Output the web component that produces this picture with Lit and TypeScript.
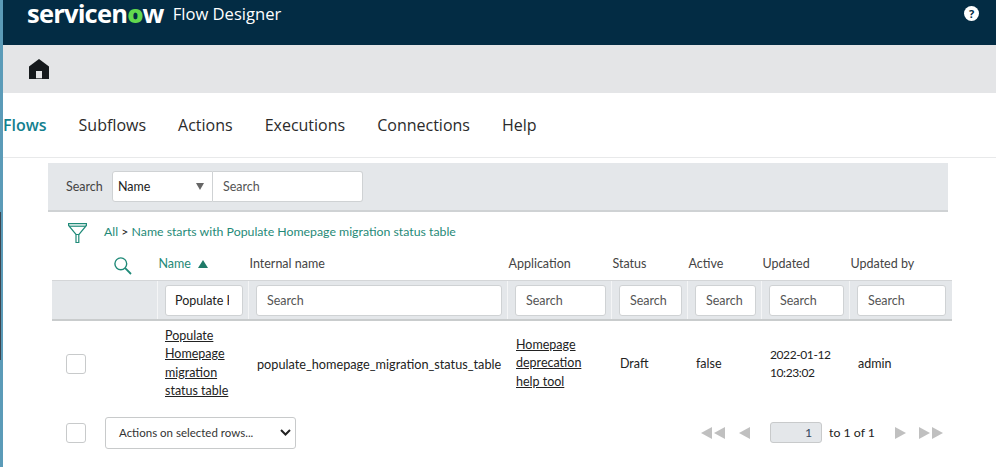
import { LitElement, css, html } from "lit";
import { customElement } from "lit/decorators.js";

const columns = [
    { label: "Name", width: 91, value: "Populate H" },
    { label: "Internal name", width: 259 },
    { label: "Application", width: 104 },
    { label: "Status", width: 76 },
    { label: "Active", width: 74 },
    { label: "Updated", width: 88 },
    { label: "Updated by", width: 102 },
];

@customElement("app-root")
export class AppRoot extends LitElement {
    render() {
        return html`
        <div class="strip"><span class="strip-dark"></span></div>
        <div class="page">
            <header class="topbar">
                <span class="logo">servicen<span class="logo-o">o</span>w</span>
                <span class="product">Flow Designer</span>
                <span class="help">?</span>
            </header>
            <div class="homebar">
                <svg width="20" height="20" viewBox="0 0 20 20">
                    <path fill="#15191c" d="M10 0 L20 7.500 V20 H0 V7.500 Z"/>
                    <rect x="7" y="12" width="6" height="7.300" fill="#e4e5e7"/>
                </svg>
            </div>
            <nav class="tabs">
                <span class="active">Flows</span>
                <span>Subflows</span>
                <span>Actions</span>
                <span>Executions</span>
                <span>Connections</span>
                <span>Help</span>
            </nav>
            <section class="searchbar">
                <span class="search-label">Search</span>
                <span class="select">Name<i></i></span>
                <span class="field joined">Search</span>
            </section>
            <div class="crumbs">
                <svg class="funnel" width="19" height="20" viewBox="0 0 19 20" fill="none" stroke="#1f8a78" stroke-width="1.200">
                    <path d="M.6 .6 H18.400 V2.500 L11 11.500 H8 L.6 2.500 Z"/>
                    <path d="M1 3.200 H18"/>
                    <path d="M8 11.500 V19.500 H10.800 V11.500"/>
                </svg>
                <span class="crumb-text"><a>All</a> <b>&gt;</b> <a>Name starts with Populate Homepage migration status table</a></span>
            </div>
            <div class="table">
                <div class="heads">
                    <div class="head-icon">
                        <svg width="18" height="18" viewBox="0 0 18 18" fill="none" stroke="#1f8a78" stroke-width="1.400">
                            <circle cx="6.800" cy="6.800" r="5.900"/>
                            <path d="M11.200 11.200 L17 17" stroke-width="1.800"/>
                        </svg>
                    </div>
                    ${columns.map((c, i) => html`
                        <div class="head ${i === 0 ? "sorted" : ""}" style="width:${c.width}px">
                            ${c.label}${i === 0 ? html`<i class="sort-up"></i>` : ""}
                        </div>`)}
                </div>
                <div class="filters">
                    <div class="filter-blank"></div>
                    ${columns.map(c => html`
                        <div class="filter" style="width:${c.width}px">
                            ${c.value
                                ? html`<span class="field filled"><span class="clip">${c.value}</span></span>`
                                : html`<span class="field">Search</span>`}
                        </div>`)}
                </div>
                <div class="row">
                    <div class="check-cell"><span class="check"></span></div>
                    <div class="cell name first" style="width:91px"><u>Populate</u><u>Homepage</u><u>migration</u><u>status table</u></div>
                    <div class="cell internal" style="width:259px">populate_homepage_migration_status_table</div>
                    <div class="cell name" style="width:104px"><u>Homepage</u><u>deprecation</u><u>help tool</u></div>
                    <div class="cell" style="width:76px">Draft</div>
                    <div class="cell" style="width:74px">false</div>
                    <div class="cell stamp" style="width:88px">2022-01-12<br>10:23:02</div>
                    <div class="cell" style="width:102px">admin</div>
                </div>
            </div>
            <footer class="footer">
                <span class="check"></span>
                <span class="actions">Actions on selected rows...
                    <svg width="11" height="7" viewBox="0 0 11 7" fill="none" stroke="#222" stroke-width="2"><path d="M1 1 L5.500 5.500 L10 1"/></svg>
                </span>
                <div class="pager">
                    <i class="tri left"></i><i class="tri left close"></i>
                    <i class="tri left single"></i>
                    <span class="page-box">1</span>
                    <span class="page-text">to 1 of 1</span>
                    <i class="tri right next"></i>
                    <i class="tri right last"></i><i class="tri right close"></i>
                </div>
            </footer>
        </div>`;
    }

    static styles = css`
    :host {
        display: flex;
        width: 996px;
        height: 467px;
        overflow: hidden;
        background: #fff;
        font-family: "Lato", "Noto Sans", sans-serif;
        color: #222;
    }

    .strip {
        flex: none;
        width: 3px;
        background: #5b9bb8;
        padding-top: 212px;
        box-sizing: border-box;
    }

    .strip-dark {
        display: block;
        width: 1px;
        height: 148px;
        background: #3d4650;
    }

    .page {
        flex: 1;
        min-width: 0;
    }

    .topbar {
        height: 45px;
        background: #032c44;
        color: #fff;
        display: flex;
        align-items: flex-start;
        box-sizing: border-box;
        padding: 0 0 0 24px;
    }

    .logo {
        font: 700 25.500px/26px "Open Sans", sans-serif;
        letter-spacing: -0.8px;
    }

    .logo-o {
        color: #62d84e;
        font-weight: 800;
    }

    .product {
        font: 400 16.600px/28px "Open Sans", sans-serif;
        margin-left: 9px;
    }

    .help {
        width: 15px;
        height: 15px;
        border-radius: 50%;
        background: #fff;
        color: #032c44;
        font: 700 11px/15px "Open Sans", sans-serif;
        text-align: center;
        margin: 6px 17px 0 auto;
    }

    .homebar {
        height: 48px;
        background: #e4e5e7;
        display: flex;
        align-items: center;
        padding-left: 26px;
    }

    .tabs {
        height: 65px;
        display: flex;
        align-items: center;
        gap: 32px;
        border-bottom: 1px solid #e8e9ea;
        box-sizing: border-box;
        font: 400 16px/20px "Open Sans", sans-serif;
        color: #2b2b2b;
    }

    .tabs .active {
        color: #13808f;
        font-weight: 600;
    }

    .searchbar {
        margin: 5px 0 0 45px;
        width: 900px;
        height: 49px;
        box-sizing: border-box;
        background: #e4e7ea;
        border-bottom: 2px solid #cfd2d4;
        display: flex;
        align-items: center;
    }

    .search-label {
        font-size: 12.500px;
        color: #444;
        margin-left: 18px;
        width: 46px;
    }

    .select {
        width: 101px;
        height: 31px;
        box-sizing: border-box;
        background: #fff;
        border: 1px solid #cfd2d4;
        border-radius: 3px 0 0 3px;
        font-size: 12.500px;
        line-height: 29px;
        padding-left: 5px;
        position: relative;
    }

    .select i {
        position: absolute;
        right: 8px;
        top: 11px;
        border-left: 4px solid transparent;
        border-right: 4px solid transparent;
        border-top: 7px solid #666;
    }

    .field {
        display: block;
        box-sizing: border-box;
        height: 31px;
        background: #fff;
        border: 1px solid #cfd2d4;
        border-radius: 3px;
        font-size: 12.500px;
        line-height: 29px;
        color: #555;
        padding-left: 10px;
        overflow: hidden;
        white-space: nowrap;
    }

    .field.joined {
        width: 150px;
        border-left: 0;
        border-radius: 0 3px 3px 0;
    }

    .field.filled {
        color: #222;
        padding-left: 9px;
    }

    .clip {
        display: block;
        width: 54px;
        overflow: hidden;
    }

    .crumbs {
        margin: 7px 0 0 65px;
        height: 24px;
        display: flex;
        align-items: center;
    }

    .funnel {
        flex: none;
        margin-top: 4px;
    }

    .crumb-text {
        margin-left: 17px;
        font-size: 12.300px;
        color: #1f8a78;
    }

    .crumb-text b {
        font-weight: 400;
        color: #222;
    }

    .table {
        margin: 4px 0 0 49px;
        width: 900px;
    }

    .heads {
        display: flex;
        height: 33px;
        align-items: center;
        font-size: 12.500px;
        color: #444;
    }

    .head-icon {
        width: 106px;
        padding: 4px 0 0 62px;
        box-sizing: border-box;
        display: flex;
    }

    .head {
        box-sizing: border-box;
        padding-left: 0.5px;
        white-space: nowrap;
    }

    .head.sorted {
        color: #1f8a78;
        display: flex;
        align-items: center;
        gap: 7px;
    }

    .sort-up {
        border-left: 5px solid transparent;
        border-right: 5px solid transparent;
        border-bottom: 8px solid #1f7a68;
    }

    .filters {
        display: flex;
        height: 41px;
        background: #e4e7ea;
        border-top: 1px solid #d4d6d8;
        border-bottom: 2px solid #c9cccd;
        box-sizing: border-box;
        align-items: stretch;
    }

    .filter-blank {
        width: 106px;
        border-right: 1px solid #f4f5f6;
        box-sizing: border-box;
    }

    .filter {
        box-sizing: border-box;
        padding: 4px 5px 0 7px;
        border-right: 1px solid #f4f5f6;
    }

    .filter:last-child {
        border-right: 0;
        padding-right: 6px;
    }

    .row {
        display: flex;
        align-items: center;
        height: 85px;
        font-size: 12.500px;
        color: #222;
    }

    .check-cell {
        width: 106px;
        padding-left: 14px;
        box-sizing: border-box;
    }

    .check {
        display: block;
        flex: none;
        width: 20px;
        height: 20px;
        box-sizing: border-box;
        background: #fff;
        border: 1px solid #c8cacb;
        border-radius: 3px;
    }

    .cell {
        box-sizing: border-box;
        padding-left: 8px;
        white-space: nowrap;
    }

    .cell.first {
        padding-left: 7px;
    }

    .cell.internal {
        font-size: 12.700px;
    }

    .cell.name u {
        display: block;
        line-height: 18.500px;
    }

    .cell.stamp {
        font-size: 12px;
        letter-spacing: -0.4px;
        line-height: 18px;
    }

    .footer {
        display: flex;
        align-items: center;
        height: 53px;
        margin-left: 63px;
    }

    .actions {
        margin-left: 19px;
        width: 191px;
        height: 32px;
        box-sizing: border-box;
        border: 1px solid #c8cacb;
        border-radius: 3px;
        font-size: 11.500px;
        color: #333;
        display: flex;
        align-items: center;
        justify-content: space-between;
        padding: 0 4px 0 13px;
    }

    .pager {
        margin-left: auto;
        margin-right: 53px;
        display: flex;
        align-items: center;
        font-size: 12.300px;
    }

    .tri {
        display: block;
        border-top: 6.500px solid transparent;
        border-bottom: 6.500px solid transparent;
    }

    .tri.left {
        border-right: 11px solid #c0c0c0;
    }

    .tri.right {
        border-left: 11px solid #c0c0c0;
    }

    .tri.close {
        margin-left: 2px;
    }

    .tri.single {
        margin-left: 14px;
    }

    .page-box {
        width: 52px;
        height: 21px;
        box-sizing: border-box;
        margin-left: 20px;
        background: #e4e7ea;
        border: 1px solid #c8cacb;
        border-radius: 3px;
        line-height: 19px;
        text-align: right;
        padding-right: 9px;
        color: #34495e;
    }

    .page-text {
        margin-left: 7px;
    }

    .tri.next {
        margin-left: 20px;
    }

    .tri.last {
        margin-left: 13px;
    }
    `;
}

declare global {
    interface HTMLElementTagNameMap {
        "app-root": AppRoot
    }
}
